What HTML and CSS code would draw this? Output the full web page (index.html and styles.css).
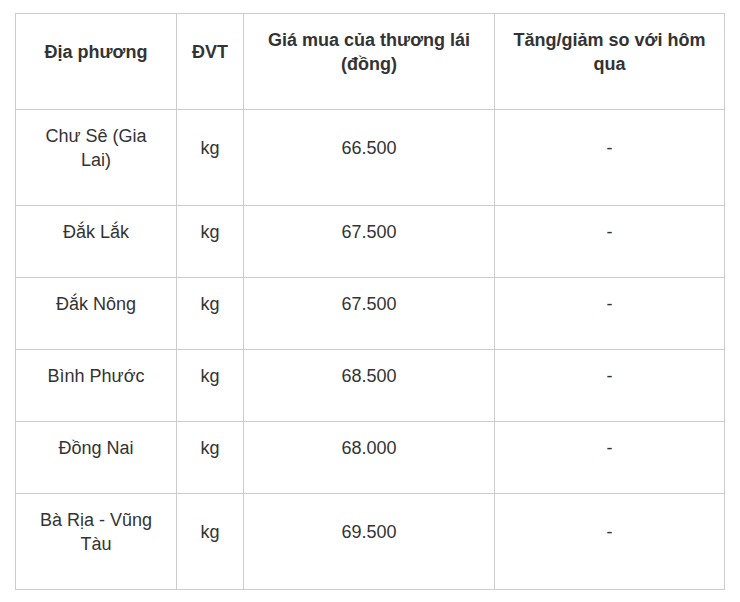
FILE: index.html
```html
<!DOCTYPE html>
<html lang="vi">
<head>
<meta charset="utf-8">
<title>Giá cà phê</title>
<link rel="stylesheet" href="styles.css">
</head>
<body>
<table class="price-table">
  <colgroup>
    <col class="c1"><col class="c2"><col class="c3"><col class="c4">
  </colgroup>
  <thead>
    <tr>
      <th><p>Địa phương</p></th>
      <th><p>ĐVT</p></th>
      <th><p>Giá mua của thương lái (đồng)</p></th>
      <th><p>Tăng/giảm so với hôm qua</p></th>
    </tr>
  </thead>
  <tbody>
    <tr><td><p>Chư Sê (Gia Lai)</p></td><td><p>kg</p></td><td><p>66.500</p></td><td><p>-</p></td></tr>
    <tr><td><p>Đắk Lắk</p></td><td><p>kg</p></td><td><p>67.500</p></td><td><p>-</p></td></tr>
    <tr><td><p>Đắk Nông</p></td><td><p>kg</p></td><td><p>67.500</p></td><td><p>-</p></td></tr>
    <tr><td><p>Bình Phước</p></td><td><p>kg</p></td><td><p>68.500</p></td><td><p>-</p></td></tr>
    <tr><td><p>Đồng Nai</p></td><td><p>kg</p></td><td><p>68.000</p></td><td><p>-</p></td></tr>
    <tr><td><p>Bà Rịa - Vũng Tàu</p></td><td><p>kg</p></td><td><p>69.500</p></td><td><p>-</p></td></tr>
  </tbody>
</table>
</body>
</html>
```
FILE: styles.css
```css
html, body {
  margin: 0;
  background: #ffffff;
}
body {
  padding: 13px 15px;
  font-family: "Liberation Sans", Arial, sans-serif;
  font-size: 18px;
  color: #333333;
}
.price-table {
  border-collapse: collapse;
  table-layout: fixed;
  width: 709px;
}
.c1 { width: 161px; }
.c2 { width: 67px; }
.c3 { width: 251px; }
.c4 { width: 230px; }
.price-table th,
.price-table td {
  border: 1px solid #cccccc;
  padding: 14px 15px;
  text-align: center;
  vertical-align: middle;
  line-height: 24px;
}
.price-table th {
  font-weight: bold;
  color: #333333;
}
.price-table p {
  margin: 0 0 19px 0;
}
```
